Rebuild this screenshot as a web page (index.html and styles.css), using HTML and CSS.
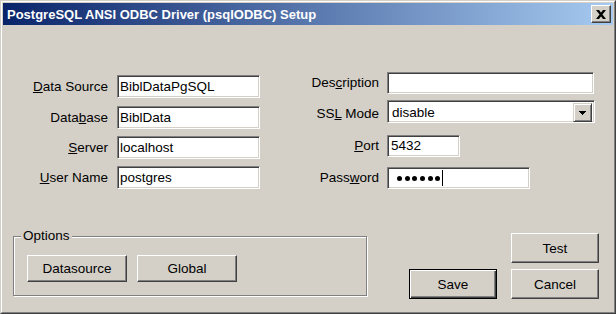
FILE: index.html
```html
<!DOCTYPE html>
<html lang="en">
<head>
  <meta charset="UTF-8" />
  <title>PostgreSQL ANSI ODBC Driver (psqlODBC) Setup</title>
  <link rel="stylesheet" href="styles.css">
</head>
<body>
  <div class="window">
    <div class="frame">
      <div class="titlebar">
        <span class="title">PostgreSQL ANSI ODBC Driver (psqlODBC) Setup</span>
        <button class="close" aria-label="Close">
          <svg width="10" height="9" viewBox="0 0 10 9">
            <path d="M0 0h3l7 9h-3z M7 0h3l-7 9h-3z" fill="#000"/>
          </svg>
        </button>
      </div>

      <div class="client">
        <div class="form">
          <!-- left column -->
          <div class="col col-left">
            <label><u>D</u>ata Source</label>
            <div class="edit">BiblDataPgSQL</div>
            <label>Data<u>b</u>ase</label>
            <div class="edit">BiblData</div>
            <label><u>S</u>erver</label>
            <div class="edit">localhost</div>
            <label><u>U</u>ser Name</label>
            <div class="edit">postgres</div>
          </div>

          <!-- right column -->
          <div class="col col-right">
            <label>Des<u>c</u>ription</label>
            <div class="edit desc"></div>
            <label class="ssl">SS<u>L</u> Mode</label>
            <div class="edit combo">
              <span class="combo-text">disable</span>
              <span class="drop">
                <svg width="7" height="4" viewBox="0 0 7 4" shape-rendering="crispEdges">
                  <path d="M0 0h7v1h-1v1h-1v1h-1v1h-1v-1h-1v-1h-1v-1h-1z" fill="#000"/>
                </svg>
              </span>
            </div>
            <label><u>P</u>ort</label>
            <div class="edit port">5432</div>
            <label>Pass<u>w</u>ord</label>
            <div class="edit password">
              <span class="dot"></span><span class="dot"></span><span class="dot"></span>
              <span class="dot"></span><span class="dot"></span><span class="dot"></span>
              <span class="caret"></span>
            </div>
          </div>
        </div>

        <div class="bottom">
          <div class="group">
            <span class="legend">Options</span>
            <div class="group-buttons">
              <button class="btn wide">Datasource</button>
              <button class="btn wide">Global</button>
            </div>
          </div>
          <div class="actions">
            <button class="btn test">Test</button>
            <button class="btn default">Save</button>
            <button class="btn">Cancel</button>
          </div>
        </div>
      </div>
    </div>
  </div>
</body>
</html>
```

FILE: styles.css
```css
* {
  box-sizing: border-box;
}

body {
  margin: 0;
  font-family: "Liberation Sans", Arial, sans-serif;
  font-size: 13.5px;
  color: #000;
  background-color: #d4d0c8;
}

.window {
  width: 616px;
  height: 314px;
  border: 1px solid;
  border-color: #d4d0c8 #404040 #404040 #d4d0c8;
  background-color: #d4d0c8;
}

.frame {
  height: 100%;
  border: 1px solid;
  border-color: #fff #808080 #808080 #fff;
  padding: 1px;
}

/* title bar */
.titlebar {
  height: 22px;
  display: flex;
  align-items: center;
  justify-content: space-between;
  padding: 0 2px 0 4px;
  background: linear-gradient(to right, #0a246a, #a6caf0);
}

.title {
  color: #fff;
  font-weight: bold;
  font-size: 13px;
  white-space: nowrap;
}

.close {
  width: 20px;
  height: 18px;
  padding: 0;
  display: flex;
  align-items: center;
  justify-content: center;
  background-color: #d4d0c8;
  border: 1px solid;
  border-color: #fff #404040 #404040 #fff;
  box-shadow: inset -1px -1px 0 #808080;
}

/* form fields */
.form {
  display: flex;
  align-items: flex-start;
  margin-top: 47px;
}

.col {
  display: grid;
  align-items: start;
}

.col-left {
  grid-template-columns: 105px 143px;
  grid-template-rows: 31px 30px 30px 23px;
  column-gap: 9px;
  padding-top: 3px;
}

.col-right {
  grid-template-columns: 119px auto;
  grid-template-rows: 28px 35px 32px 22px;
  column-gap: 8px;
}

label {
  text-align: right;
  line-height: 23px;
  white-space: nowrap;
}

.col-right label {
  line-height: 22px;
}

.col-right label.ssl {
  padding-top: 3px;
}

u {
  text-decoration-thickness: 1px;
  text-underline-offset: 1px;
}

.edit {
  height: 23px;
  background-color: #fff;
  border: 1px solid;
  border-color: #808080 #fff #fff #808080;
  box-shadow: inset 1px 1px 0 #404040, inset -1px -1px 0 #d4d0c8;
  padding: 0 2px;
  line-height: 21px;
  white-space: nowrap;
  overflow: hidden;
}

.col-right .edit {
  height: 22px;
  line-height: 20px;
}

.edit.desc {
  width: 207px;
}

.edit.port {
  width: 73px;
  padding-left: 3px;
}

.edit.password {
  width: 143px;
  display: flex;
  align-items: center;
  padding-left: 9px;
}

.col-right .edit.combo {
  width: 208px;
  height: 23px;
  display: flex;
  justify-content: space-between;
  padding: 2px 2px 2px 4px;
}

.combo-text {
  line-height: 19px;
}

.drop {
  width: 19px;
  height: 19px;
  display: flex;
  align-items: center;
  justify-content: center;
  background-color: #d4d0c8;
  border: 1px solid;
  border-color: #d4d0c8 #404040 #404040 #d4d0c8;
  box-shadow: inset 1px 1px 0 #fff, inset -1px -1px 0 #808080;
}

.dot {
  width: 5px;
  height: 5px;
  border-radius: 50%;
  background-color: #000;
  margin-right: 2.7px;
}

.caret {
  width: 1px;
  height: 16px;
  background-color: #000;
  margin-left: -1px;
}

/* bottom part */
.bottom {
  display: flex;
  align-items: flex-start;
  margin-top: 44px;
  padding-left: 10px;
}

.group {
  position: relative;
  width: 354px;
  height: 60px;
  margin-top: 3px;
  border: 1px solid #808080;
  box-shadow: 1px 1px 0 #fff, inset 1px 1px 0 #fff;
  padding: 18px 0 0 13px;
}

.legend {
  position: absolute;
  top: -9px;
  left: 7px;
  padding: 0 2px;
  line-height: 16px;
  background-color: #d4d0c8;
}

.group-buttons {
  display: flex;
  gap: 10px;
}

.btn {
  font-family: inherit;
  font-size: inherit;
  color: #000;
  padding: 0;
  background-color: #d4d0c8;
  border: 1px solid;
  border-color: #fff #404040 #404040 #fff;
  box-shadow: inset -1px -1px 0 #808080;
}

.btn.wide {
  width: 100px;
  height: 27px;
}

.actions {
  display: grid;
  grid-template-columns: 88px 88px;
  grid-template-rows: 30px 30px;
  column-gap: 14px;
  row-gap: 6px;
  margin-left: 42px;
}

.btn.test {
  grid-column: 2;
}

.btn.default {
  border-color: #000;
  box-shadow: inset 1px 1px 0 #fff, inset -1px -1px 0 #404040, inset -2px -2px 0 #808080;
}
```
